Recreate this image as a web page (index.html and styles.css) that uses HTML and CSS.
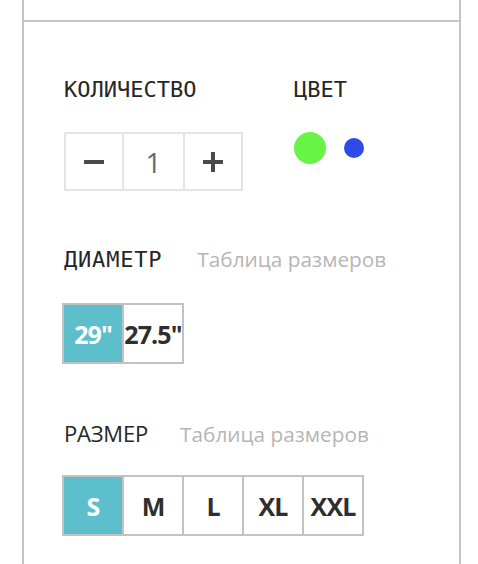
FILE: index.html
```html
<!DOCTYPE html>
<html lang="ru">
<head>
<meta charset="utf-8">
<title>Товар</title>
<link rel="stylesheet" href="styles.css">
</head>
<body>
<div class="frame">
  <div class="top-strip"></div>
  <div class="panel">
    <div class="row-top">
      <div class="qty">
        <div class="label mono">КОЛИЧЕСТВО</div>
        <div class="stepper">
          <button class="step-btn minus" aria-label="Уменьшить"><span class="bar"></span></button>
          <div class="step-value">1</div>
          <button class="step-btn plus" aria-label="Увеличить"><span class="bar"></span><span class="bar vert"></span></button>
        </div>
      </div>
      <div class="color">
        <div class="label mono">ЦВЕТ</div>
        <div class="swatches">
          <span class="swatch green"></span>
          <span class="swatch blue"></span>
        </div>
      </div>
    </div>

    <div class="option diameter">
      <div class="option-head">
        <span class="label mono wide">ДИАМЕТР</span>
        <a class="size-link" href="#">Таблица размеров</a>
      </div>
      <div class="choices">
        <span class="choice active">29"</span>
        <span class="choice">27.5"</span>
      </div>
    </div>

    <div class="option size">
      <div class="option-head">
        <span class="label sans">РАЗМЕР</span>
        <a class="size-link" href="#">Таблица размеров</a>
      </div>
      <div class="choices">
        <span class="choice active">S</span>
        <span class="choice">M</span>
        <span class="choice">L</span>
        <span class="choice">XL</span>
        <span class="choice">XXL</span>
      </div>
    </div>
  </div>
</div>
</body>
</html>
```

FILE: styles.css
```css
html, body {
  margin: 0;
  padding: 0;
  background: #ffffff;
}

body {
  font-family: "Open Sans", "Noto Sans", sans-serif;
  color: #2b2b2b;
}

.frame {
  margin-left: 22px;
  width: 439px;
  box-sizing: border-box;
  border-left: 2px solid #c4c4c4;
  border-right: 2px solid #c4c4c4;
  min-height: 564px;
}

.top-strip {
  height: 20px;
}

.panel {
  border-top: 2px solid #c4c4c4;
  padding: 56px 0 0 40px;
}

.label {
  color: #262626;
  line-height: 24px;
}

.mono {
  font-family: "DejaVu Sans Mono", monospace;
  font-size: 22px;
}

.mono.wide {
  letter-spacing: 0.8px;
}

.sans {
  font-family: "Open Sans", sans-serif;
  font-size: 22px;
  letter-spacing: -0.2px;
}

.row-top {
  display: flex;
  gap: 51px;
}

.stepper {
  margin-top: 30px;
  display: flex;
  border: 2px solid #e4e4e4;
  height: 55px;
}

.step-btn,
.step-value {
  display: flex;
  align-items: center;
  justify-content: center;
  position: relative;
}

.step-btn {
  border: 0;
  padding: 0;
  background: #ffffff;
  width: 56px;
}

.step-value {
  width: 59px;
  border-left: 2px solid #e4e4e4;
  border-right: 2px solid #e4e4e4;
  font-family: "Open Sans", sans-serif;
  font-weight: 400;
  font-size: 28px;
  color: #6a6a6a;
}

.bar {
  display: block;
  width: 20px;
  height: 4px;
  background: #4a4a4a;
}

.plus .bar.vert {
  position: absolute;
  width: 4px;
  height: 20px;
}

.swatches {
  margin-top: 30px;
  display: flex;
  align-items: center;
  gap: 18px;
  height: 32px;
}

.swatch {
  display: block;
  border-radius: 50%;
}

.swatch.green {
  width: 32px;
  height: 32px;
  background: #68f447;
}

.swatch.blue {
  width: 20px;
  height: 20px;
  background: #2d4be6;
}

.option.diameter {
  margin-top: 56px;
}

.option.size {
  margin-top: 57px;
}

.option-head {
  display: flex;
  align-items: baseline;
  gap: 32px;
  line-height: 24px;
}

.option.diameter .option-head {
  gap: 35px;
}

.size-link {
  font-family: "Open Sans", sans-serif;
  font-size: 20.8px;
  color: #b6b6b6;
  text-decoration: none;
  line-height: 24px;
}

.choices {
  margin: 31px 0 0 -2px;
  display: inline-flex;
  border: 2px solid #c2c2c2;
}

.option.size .choices {
  margin-top: 29px;
}

.choice {
  width: 58px;
  height: 57px;
  display: flex;
  align-items: center;
  justify-content: center;
  font-family: "Open Sans", sans-serif;
  font-weight: 700;
  font-size: 25px;
  letter-spacing: -0.9px;
  color: #2e2e2e;
  white-space: nowrap;
  background: #ffffff;
}

.choice + .choice {
  border-left: 2px solid #c2c2c2;
}

.choice.active {
  background: #5cbfcb;
  color: #ffffff;
}
```
